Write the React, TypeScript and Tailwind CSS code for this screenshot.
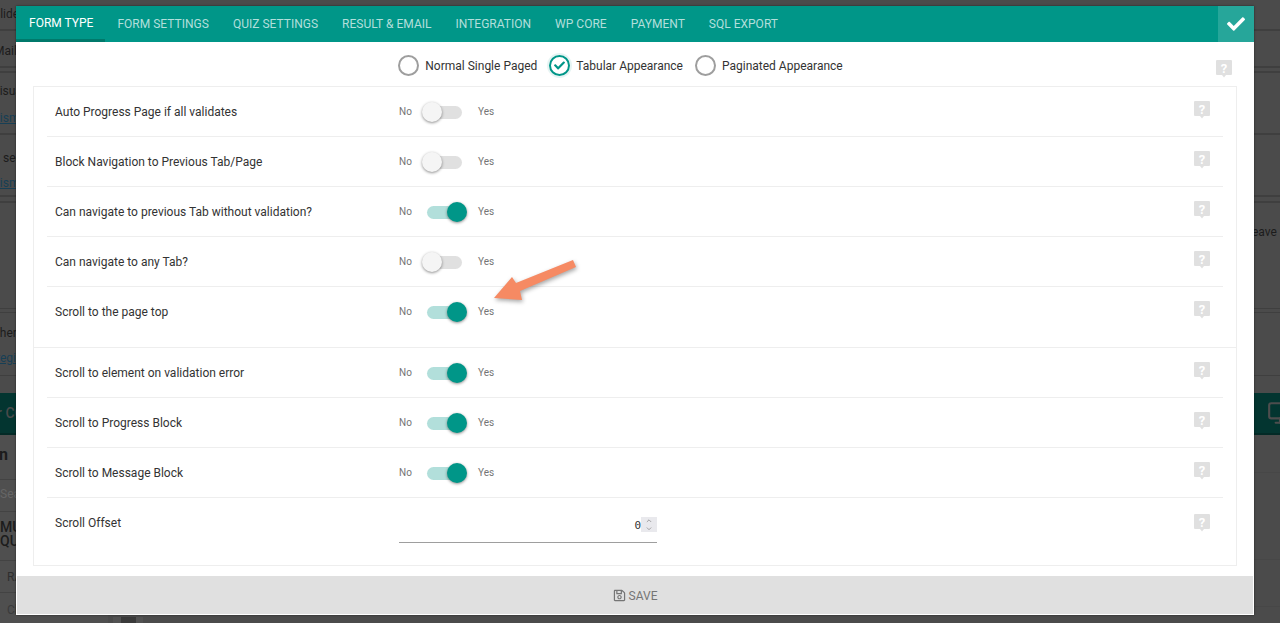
import { ChevronDown, ChevronUp, Monitor } from 'lucide-react'
import { FaCheck, FaRegSave } from 'react-icons/fa'

const tabs = ['Form Settings', 'Quiz Settings', 'Result & Email', 'Integration', 'WP Core', 'Payment', 'SQL Export']

const firstGroup = [
  { label: 'Auto Progress Page if all validates', on: false },
  { label: 'Block Navigation to Previous Tab/Page', on: false },
  { label: 'Can navigate to previous Tab without validation?', on: true },
  { label: 'Can navigate to any Tab?', on: false },
  { label: 'Scroll to the page top', on: true },
]

const secondGroup = [
  { label: 'Scroll to element on validation error', on: true },
  { label: 'Scroll to Progress Block', on: true },
  { label: 'Scroll to Message Block', on: true },
]

function HelpIcon() {
  return (
    <svg width="16" height="18" viewBox="0 0 16 18" className="shrink-0">
      <path d="M1 0h14a1 1 0 0 1 1 1v13a1 1 0 0 1-1 1h-5l-2 2.5L6 15H1a1 1 0 0 1-1-1V1a1 1 0 0 1 1-1z" fill="#e0e0e0" />
      <text x="8" y="12.5" textAnchor="middle" fontSize="13" fontWeight="700" fill="#fff" fontFamily="Roboto, sans-serif">
        ?
      </text>
    </svg>
  )
}

function Toggle({ on }: { on: boolean }) {
  return (
    <div className="flex items-center w-[100px] h-5 text-[10px] text-[#757575]">
      <span className="w-7 pb-[1px]">No</span>
      <div className={`relative w-[35px] h-[13px] rounded-full ${on ? 'bg-[#b2dfdb]' : 'bg-[#e0e0e0]'}`}>
        <span
          className={`absolute top-[-4px] w-5 h-5 rounded-full shadow-[0_1px_3px_rgba(0,0,0,0.45)] ${
            on ? 'left-5 bg-[#009688]' : 'left-[-5px] bg-[#f5f5f5]'
          }`}
        />
      </div>
      <span className="ml-4 pb-[1px]">Yes</span>
    </div>
  )
}

function Row({ label, on, tall, last }: { label: string; on: boolean; tall?: boolean; last?: boolean }) {
  return (
    <div className={`flex items-start pt-[15px] pl-2 ${tall ? 'h-[60px]' : 'h-[50px]'} ${last ? '' : 'border-b border-[#eeeeee]'}`}>
      <div className="w-[344px] text-[12px] leading-5 text-[#333333]">{label}</div>
      <Toggle on={on} />
      <div className="ml-auto mr-[13px] -mt-[1px]">
        <HelpIcon />
      </div>
    </div>
  )
}

function Radio({ label, checked }: { label: string; checked?: boolean }) {
  return (
    <div className="flex items-center gap-[6px] text-[12px] text-[#333333]">
      {checked ? (
        <span className="flex items-center justify-center w-[21px] h-[21px] rounded-full border-2 border-[#009688] shadow-[0_0_0_2px_rgba(0,150,136,0.1)]">
          <FaCheck size={11} className="text-[#009688]" />
        </span>
      ) : (
        <span className="w-[21px] h-[21px] rounded-full border-2 border-[#9e9e9e]" />
      )}
      {label}
    </div>
  )
}

function Backdrop() {
  return (
    <div className="w-full text-[12px] text-[#1c1c1c] whitespace-nowrap">
      <div className="h-[29px] pt-[5px] -ml-[7px]">Slider</div>
      <div className="h-[39px] border-y-2 border-[#3f3f3f] pt-[11px] -ml-[6px]">Mailchimp</div>
      <div className="h-[5px] border-b-2 border-[#3f3f3f]" />
      <div className="h-[60px] pt-[9px] -ml-[8px]">
        Visual
        <div className="mt-[9px] -ml-[3px] text-[#173f55] underline">prism</div>
      </div>
      <div className="h-[62px] border-t-2 border-[#3f3f3f] pt-[14px] pl-[3px]">
        see
        <div className="mt-[7px] -ml-[14px] text-[#173f55] underline">prism</div>
      </div>
      <div className="h-[8px] border-y-2 border-[#3f3f3f]" />
      <div className="h-[105px] pt-[20px] pl-[1252px]">eave us</div>
      <div className="h-[5px] border-y border-[#3f3f3f]" />
      <div className="h-[62px] pt-[11px] -ml-[11px]">
        other
        <div className="mt-[7px] ml-[7px] text-[#173f55] underline">regi</div>
      </div>
      <div className="h-[18px] border-t border-[#3f3f3f]" />
      <div className="flex items-center justify-between h-[42px] bg-[#033530] border-b-2 border-[#032a26] text-[#4a4a4a] font-medium text-[14px] overflow-hidden">
        <span className="-ml-[3px]">r CO</span>
        <Monitor size={26} className="-mr-[13px] text-[#4d4d4d]" />
      </div>
      <div className="flex justify-between h-[188px]">
        <div className="w-[108px] bg-[#4f4f4f]">
          <div className="h-[45px] pt-[8px] text-[16px] font-bold -ml-[1px] border-b border-[#434343]">n</div>
          <div className="h-[32px] pt-[5px] text-[#666666] border-b border-[#434343]">Search</div>
          <div className="h-[49px] pt-[8px] text-[14px] leading-[14px] font-medium border-b border-[#434343]">
            MU
            <br />
            QU
          </div>
          <div className="h-[31px] pt-[7px] pl-[7px] text-[#2e2e2e]">RA</div>
          <div className="h-[31px] pt-[8px] pl-[7px] text-[#3a3a3a] border-t border-[#434343]">Cl</div>
        </div>
        <div className="w-[8px] mt-[182px] ml-[5px] bg-[#525252]" />
        <div className="w-[15px] mt-[182px] bg-[#3a3a3a]" />
        <div className="w-[7px] mt-[182px] mr-auto bg-[#525252]" />
        <div className="w-[26px]">
          <div className="h-[38px] border-b border-[#474747]" />
          <div className="h-[87px] border-b border-[#474747]" />
          <div className="h-[47px] border-b border-[#474747]" />
        </div>
      </div>
    </div>
  )
}

function ArrowMark() {
  return (
    <svg width="100" height="60" viewBox="0 0 100 60" className="absolute left-[484px] top-[252px] drop-shadow-[1px_2px_2px_rgba(0,0,0,0.35)]">
      <path d="M89 8 92 15 36 39 38 48 10 46 28 25 32 31z" fill="#f68a63" />
    </svg>
  )
}

export default function App() {
  return (
    <div className="relative w-[1280px] h-[623px] overflow-hidden bg-[#4b4b4b] font-['Roboto',sans-serif]">
      <Backdrop />

      <div className="absolute left-4 top-[6px] w-[1238px] h-[609px] flex flex-col bg-white shadow-[0_0_2px_rgba(0,0,0,0.5)]">
        <div className="flex items-center h-9 shrink-0 bg-[#009688] text-[12.03px] uppercase">
          <div className="h-full flex items-center pl-[13px] pr-3 pt-[2px] text-white border-b-[3px] border-[#00796b]">Form Type</div>
          <div className="flex ml-3 gap-6 text-[#b2dfdb]">
            {tabs.map((tab) => (
              <span key={tab}>{tab}</span>
            ))}
          </div>
          <div className="ml-auto flex items-center justify-center w-9 h-9 bg-[#26a69a]">
            <FaCheck size={18} className="text-white" />
          </div>
        </div>

        <div className="relative flex items-center justify-center gap-3 h-11 shrink-0 pr-[29px] pt-[3px]">
          <Radio label="Normal Single Paged" />
          <Radio label="Tabular Appearance" checked />
          <Radio label="Paginated Appearance" />
          <div className="absolute right-[22px] top-[18px]">
            <HelpIcon />
          </div>
        </div>

        <div className="mx-[17px] h-[480px] shrink-0 border border-[#eeeeee]">
          <div className="px-[13px] border-b border-[#eeeeee]">
            {firstGroup.map((row, i) => (
              <Row key={row.label} label={row.label} on={row.on} tall={i === 4} last={i === 4} />
            ))}
          </div>
          <div className="px-[13px]">
            {secondGroup.map((row) => (
              <Row key={row.label} label={row.label} on={row.on} />
            ))}
            <div className="flex items-start pt-[15px] pl-2">
              <div className="w-[344px] text-[12px] leading-5 text-[#333333]">Scroll Offset</div>
              <div className="flex justify-end items-start w-[258px] h-[26px] mt-[4px] border-b border-[#9e9e9e]">
                <span className="pt-[1px] text-[11px] font-['DejaVu_Sans_Mono',monospace] text-[#333333]">0</span>
                <span className="flex flex-col items-center justify-center w-4 h-[15px] bg-[#e9e9ed] text-[#757575]">
                  <ChevronUp size={8} strokeWidth={2} />
                  <ChevronDown size={8} strokeWidth={2} />
                </span>
              </div>
              <div className="ml-auto mr-[13px] mt-[1px]">
                <HelpIcon />
              </div>
            </div>
          </div>
        </div>

        <div className="flex items-center justify-center gap-[3px] h-[38px] mt-auto mx-px mb-px pt-[1px] shrink-0 bg-[#e0e0e0] text-[12px] text-[#757575]">
          <FaRegSave size={13} />
          SAVE
        </div>
      </div>

      <ArrowMark />
    </div>
  )
}
